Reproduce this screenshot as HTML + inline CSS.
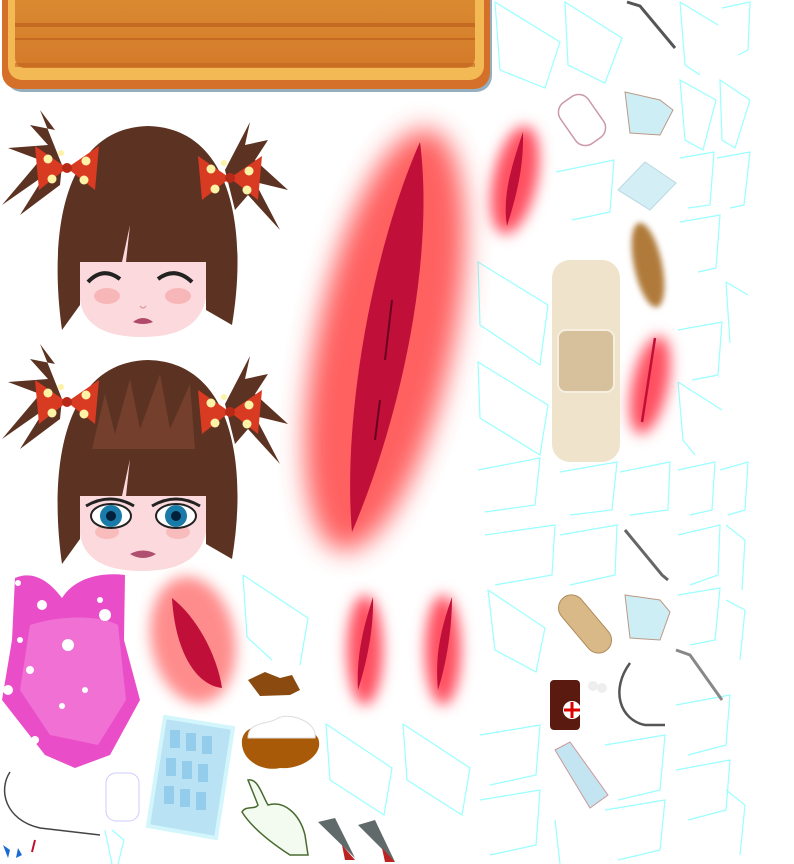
<!DOCTYPE html>
<html><head><meta charset="utf-8"><style>html,body{margin:0;padding:0;background:#fff}svg{display:block}</style></head><body>
<svg width="794" height="864" viewBox="0 0 794 864" xmlns="http://www.w3.org/2000/svg">
<defs>
<filter id="bl" x="-50%" y="-50%" width="200%" height="200%"><feGaussianBlur stdDeviation="13"/></filter>
<filter id="bl2" x="-50%" y="-50%" width="200%" height="200%"><feGaussianBlur stdDeviation="7"/></filter>
<filter id="bl3" x="-50%" y="-50%" width="200%" height="200%"><feGaussianBlur stdDeviation="3"/></filter>
<linearGradient id="wood" x1="0" y1="0" x2="0" y2="1"><stop offset="0" stop-color="#dc8e33"/><stop offset="1" stop-color="#d47a2a"/></linearGradient>
<g id="bow">
<path d="M0,0 L-32,-22 L-28,22 Z" fill="#d93a22"/><path d="M0,0 L32,-22 L28,22 Z" fill="#d93a22"/>
<circle cx="0" cy="0" r="5" fill="#b82a18"/>
<circle cx="-19" cy="-9" r="4.5" fill="#fdf3a6"/><circle cx="-15" cy="11" r="4.5" fill="#fdf3a6"/><circle cx="19" cy="-7" r="4.5" fill="#fdf3a6"/><circle cx="17" cy="12" r="4.5" fill="#fdf3a6"/><circle cx="-6" cy="-15" r="3" fill="#fdf3a6"/>
</g>
<g id="tuftL"><path d="M62,165 L40,110 L55,130 L30,125 L48,145 L8,148 L40,160 L2,205 L45,175 L20,215 L60,185 Z" fill="#5c3322"/></g>
<g id="tuftR"><path d="M225,170 L250,122 L245,145 L268,140 L255,160 L288,190 L255,182 L280,230 L248,195 L235,210 Z" fill="#5c3322"/></g>
</defs>

<!-- wood board -->
<rect x="6" y="-20" width="486" height="112" rx="16" fill="#2e6080" opacity="0.5"/>
<rect x="2" y="-20" width="488" height="109" rx="16" fill="#d4702a"/>
<rect x="8" y="-20" width="476" height="100" rx="14" fill="#f3b955"/>
<rect x="15" y="-20" width="460" height="88" rx="10" fill="url(#wood)"/>
<rect x="15" y="23" width="460" height="4" fill="#c46a22"/>
<rect x="15" y="38" width="460" height="2" fill="#c46a22"/>
<rect x="15" y="63" width="460" height="4" fill="#c16420" opacity="0.6"/>

<!-- cyan outlines -->
<g fill="none" stroke="#8ff" stroke-width="1.2" opacity="0.85">
<path d="M495,2 L560,42 L545,88 L500,70 Z"/><path d="M565,2 L622,38 L605,83 L568,65 Z"/>
<path d="M680,2 L718,25 M680,2 L685,65 L700,75"/><path d="M722,8 L750,2 L748,50 L738,55"/>
<path d="M680,80 L716,100 L703,150 L685,140 Z"/><path d="M720,80 L750,100 L735,148 L722,140 Z"/>
<path d="M556,172 L614,160 L610,212 L572,220"/><path d="M680,158 L714,152 L710,205 L688,208"/><path d="M717,158 L750,152 L744,205 L730,208"/>
<path d="M680,222 L720,215 L716,268 L698,272"/><path d="M726,282 L748,295 M726,282 L730,343"/>
<path d="M478,262 L548,305 L540,365 L480,325 Z"/><path d="M478,362 L548,405 L540,455 L480,418 Z"/>
<path d="M678,330 L722,322 L718,375 L692,380"/><path d="M678,382 L722,410 M678,382 L683,440 L695,455"/>
<path d="M478,470 L540,458 L535,505 L485,512"/><path d="M560,472 L617,462 L612,510 L570,515"/><path d="M620,472 L670,462 L668,510 L630,515"/><path d="M678,470 L715,462 L712,510 L690,515"/><path d="M720,470 L748,462 L745,510 L728,515"/>
<path d="M485,535 L555,525 L552,575 L495,585"/><path d="M560,535 L617,525 L615,575 L570,585"/><path d="M678,535 L720,525 L718,575 L690,585"/><path d="M726,525 L745,540 L742,590"/>
<path d="M488,590 L545,628 L536,672 L495,650 Z"/><path d="M678,595 L720,588 L715,640 L690,645"/><path d="M726,600 L745,610 L740,660"/>
<path d="M243,575 L308,618 L300,665 M243,575 L247,637 L272,660"/>
<path d="M326,724 L392,768 L384,815 L330,780 Z"/><path d="M403,724 L470,768 L462,815 L407,780 Z"/>
<path d="M480,735 L540,725 L536,775 L490,785"/><path d="M480,800 L540,790 L536,845 L490,855"/>
<path d="M676,705 L730,695 L726,745 L688,755"/><path d="M605,745 L665,735 L660,790 L618,800"/><path d="M605,810 L665,800 L660,850 L618,860"/><path d="M676,770 L730,760 L726,810 L688,820"/><path d="M726,790 L745,805 L740,855"/><path d="M555,820 L560,864"/>
<path d="M105,830 L112,864 M112,830 L124,840 L118,864"/>
</g>

<!-- Face 1 -->
<g>
<use href="#tuftL"/><use href="#tuftR"/>
<path d="M62,330 C48,230 65,128 148,126 C232,128 248,230 232,325 L206,310 L206,262 L80,262 L80,305 Z" fill="#5c3322"/>
<path d="M80,262 L206,262 L206,298 C200,330 170,337 142,337 C110,337 84,328 80,300 Z" fill="#fcd9dc"/>
<path d="M122,262 L130,225 L126,262 Z" fill="#fcd9dc"/>
<ellipse cx="107" cy="296" rx="13" ry="8" fill="#f5a8a8" opacity="0.7"/><ellipse cx="178" cy="296" rx="13" ry="8" fill="#f5a8a8" opacity="0.7"/>
<path d="M88,282 Q103,266 120,279" fill="none" stroke="#222" stroke-width="4"/>
<path d="M158,279 Q175,266 192,282" fill="none" stroke="#222" stroke-width="4"/>
<path d="M133,322 Q143,314 153,322 Q143,326 133,322 Z" fill="#b04a6a"/>
<path d="M140,306 Q143,310 146,306" fill="none" stroke="#d99" stroke-width="1.2"/>
<use href="#bow" x="67" y="168"/><use href="#bow" x="230" y="178"/>
</g>
<!-- Face 2 -->
<g transform="translate(0,234)">
<use href="#tuftL"/><use href="#tuftR"/>
<path d="M62,330 C48,230 65,128 148,126 C232,128 248,230 232,325 L206,310 L206,262 L80,262 L80,305 Z" fill="#5c3322"/>
<path d="M92,215 L105,160 L115,200 L130,145 L140,195 L160,140 L170,195 L190,150 L195,215 Z" fill="#7a4230" opacity="0.8"/>
<path d="M80,262 L206,262 L206,298 C200,330 170,337 142,337 C110,337 84,328 80,300 Z" fill="#fcd9dc"/>
<path d="M122,262 L130,225 L126,262 Z" fill="#fcd9dc"/>
<ellipse cx="107" cy="298" rx="12" ry="7" fill="#f5a8a8" opacity="0.6"/><ellipse cx="178" cy="298" rx="12" ry="7" fill="#f5a8a8" opacity="0.6"/>
<path d="M86,272 Q110,258 134,272" fill="none" stroke="#222" stroke-width="3"/><path d="M152,272 Q176,258 200,272" fill="none" stroke="#222" stroke-width="3"/>
<ellipse cx="111" cy="282" rx="20" ry="12" fill="#fff" stroke="#222" stroke-width="2"/><circle cx="111" cy="282" r="11" fill="#1a7aa8"/><circle cx="111" cy="282" r="5" fill="#05203a"/>
<ellipse cx="176" cy="282" rx="20" ry="12" fill="#fff" stroke="#222" stroke-width="2"/><circle cx="176" cy="282" r="11" fill="#1a7aa8"/><circle cx="176" cy="282" r="5" fill="#05203a"/>
<path d="M130,320 Q143,313 156,320 Q143,328 130,320 Z" fill="#b05070"/>
<use href="#bow" x="67" y="168"/><use href="#bow" x="230" y="178"/>
</g>

<!-- Wounds -->
<ellipse cx="385" cy="340" rx="68" ry="215" transform="rotate(12 385 340)" fill="#ff5050" filter="url(#bl)" opacity="0.9"/>
<path d="M420,142 C435,260 400,420 352,532 C342,420 372,250 420,142 Z" fill="#c0103a"/>
<path d="M392,300 L385,360 M380,400 L375,440" stroke="#6a0020" stroke-width="2"/>
<ellipse cx="515" cy="180" rx="22" ry="55" transform="rotate(12 515 180)" fill="#ff5060" filter="url(#bl2)"/>
<path d="M523,132 C524,170 515,200 507,226 C502,195 512,165 523,132 Z" fill="#c0103a"/>
<ellipse cx="650" cy="385" rx="18" ry="50" transform="rotate(12 650 385)" fill="#ff5060" filter="url(#bl2)"/>
<path d="M655,338 L642,422" stroke="#c0103a" stroke-width="2.5"/>
<ellipse cx="193" cy="640" rx="42" ry="64" transform="rotate(-10 193 640)" fill="#ff7070" filter="url(#bl2)" opacity="0.8"/>
<path d="M172,598 C200,620 218,660 222,688 C195,685 175,650 172,598 Z" fill="#c0103a"/>
<ellipse cx="365" cy="650" rx="18" ry="55" fill="#ff5060" filter="url(#bl2)"/>
<path d="M373,597 C374,630 366,665 358,690 C356,650 366,620 373,597 Z" fill="#c0103a"/>
<ellipse cx="443" cy="650" rx="18" ry="55" fill="#ff5060" filter="url(#bl2)"/>
<path d="M452,597 C452,630 446,665 438,690 C434,650 444,620 452,597 Z" fill="#c0103a"/>
<ellipse cx="648" cy="265" rx="14" ry="43" transform="rotate(-12 648 265)" fill="#b07a3a" filter="url(#bl3)"/>

<!-- tweezers top -->
<path d="M627,2 L640,6 L675,48" fill="none" stroke="#555" stroke-width="3"/>
<!-- towel roll -->
<rect x="565" y="95" width="34" height="50" rx="12" transform="rotate(-35 582 120)" fill="#fff" stroke="#c9a" stroke-width="1.5"/>
<!-- gauze -->
<path d="M625,92 L660,100 L673,110 L660,135 L630,133 Z" fill="#cdeef5" stroke="#b98" stroke-width="1"/>
<path d="M618,190 L645,162 L676,183 L650,210 Z" fill="#d4eef6" stroke="#b8d8e0" stroke-width="1"/>
<!-- bandage -->
<rect x="552" y="260" width="68" height="202" rx="18" fill="#efe3cb"/>
<rect x="558" y="330" width="56" height="62" rx="8" fill="#d7c19d" stroke="#f6efe0" stroke-width="2"/>
<!-- swimsuit -->
<path d="M15,578 C28,572 45,575 62,598 C75,578 100,572 125,575 L124,640 L140,700 L110,755 L75,768 L45,755 L2,700 L12,640 Z" fill="#e94dc8"/>
<path d="M30,625 C60,615 100,615 118,625 L126,700 L98,745 L50,735 L20,690 Z" fill="#f070d4"/>
<g fill="#fff"><circle cx="18" cy="583" r="3"/><circle cx="42" cy="605" r="5"/><circle cx="62" cy="580" r="3"/><circle cx="20" cy="640" r="3"/><circle cx="68" cy="645" r="6"/><circle cx="30" cy="670" r="4"/><circle cx="8" cy="690" r="5"/><circle cx="62" cy="706" r="3"/><circle cx="35" cy="740" r="4"/><circle cx="100" cy="600" r="3"/><circle cx="105" cy="615" r="6"/><circle cx="85" cy="690" r="3"/></g>
<!-- dirt -->
<path d="M248,680 L265,672 L280,678 L292,675 L300,690 L290,695 L260,696 Z" fill="#8b4a10"/>
<path d="M242,740 C245,722 268,728 278,720 C290,715 310,725 318,738 C325,755 300,770 280,768 C262,772 240,760 242,740 Z" fill="#a85a08"/>
<path d="M248,738 C248,720 270,725 278,718 C290,712 318,722 315,738 Z" fill="#fff" stroke="#ddd"/>
<!-- ice pack -->
<path d="M165,717 L233,728 L216,838 L148,826 Z" fill="#b9e2f5" stroke="#d2f6fb" stroke-width="4"/>
<g fill="#8cc8ea" opacity="0.8"><rect x="170" y="730" width="10" height="18"/><rect x="186" y="733" width="10" height="18"/><rect x="202" y="736" width="10" height="18"/><rect x="166" y="758" width="10" height="18"/><rect x="182" y="761" width="10" height="18"/><rect x="198" y="764" width="10" height="18"/><rect x="164" y="786" width="10" height="18"/><rect x="180" y="789" width="10" height="18"/><rect x="196" y="792" width="10" height="18"/></g>
<!-- glove -->
<path d="M248,780 C258,778 262,795 268,805 C285,800 300,815 305,835 L308,855 L290,855 C270,842 252,828 242,812 C246,805 255,810 258,805 Z" fill="#f3faf0" stroke="#4a6a30" stroke-width="1.5"/>
<!-- cones -->
<path d="M318,822 L335,818 L355,858 Z" fill="#606a6a"/><path d="M342,845 L355,860 L345,860 Z" fill="#b22"/>
<path d="M358,825 L375,820 L395,862 Z" fill="#606a6a"/><path d="M382,848 L395,862 L385,862 Z" fill="#b22"/>
<!-- roll small -->
<rect x="106" y="773" width="33" height="48" rx="10" fill="#fff" stroke="#ccf" stroke-width="1"/>
<!-- needle thread -->
<path d="M10,772 C-2,790 5,820 40,828 L100,835" fill="none" stroke="#444" stroke-width="1.5"/>
<path d="M3,845 L10,850 L8,858 Z M18,848 L22,855 L16,858 Z" fill="#1a6ad6"/><path d="M35,840 L32,852" stroke="#c01030" stroke-width="2"/>
<!-- right lower items -->
<rect x="572" y="590" width="26" height="68" rx="13" transform="rotate(-40 585 624)" fill="#d9b987" stroke="#b08a5a" stroke-width="1"/>
<path d="M625,595 L660,600 L670,612 L660,640 L630,638 Z" fill="#cdeef5" stroke="#b98" stroke-width="1"/>
<path d="M625,530 L662,575 L668,580" fill="none" stroke="#666" stroke-width="3"/>
<path d="M676,650 L690,655 L722,700" fill="none" stroke="#888" stroke-width="3"/>
<rect x="550" y="680" width="30" height="50" rx="4" fill="#5a1a10"/><circle cx="572" cy="710" r="9" fill="#fff"/><path d="M572,702 V718 M564,710 H580" stroke="#d00" stroke-width="3"/>
<circle cx="593" cy="686" r="5" fill="#eee"/><circle cx="602" cy="688" r="5" fill="#eee"/>
<path d="M630,663 C610,690 620,720 645,725 L665,725" fill="none" stroke="#555" stroke-width="2.5"/>
<path d="M555,750 L570,742 L608,795 L590,808 Z" fill="#c3e5f2" stroke="#c99" stroke-width="1"/>
</svg>
</body></html>
